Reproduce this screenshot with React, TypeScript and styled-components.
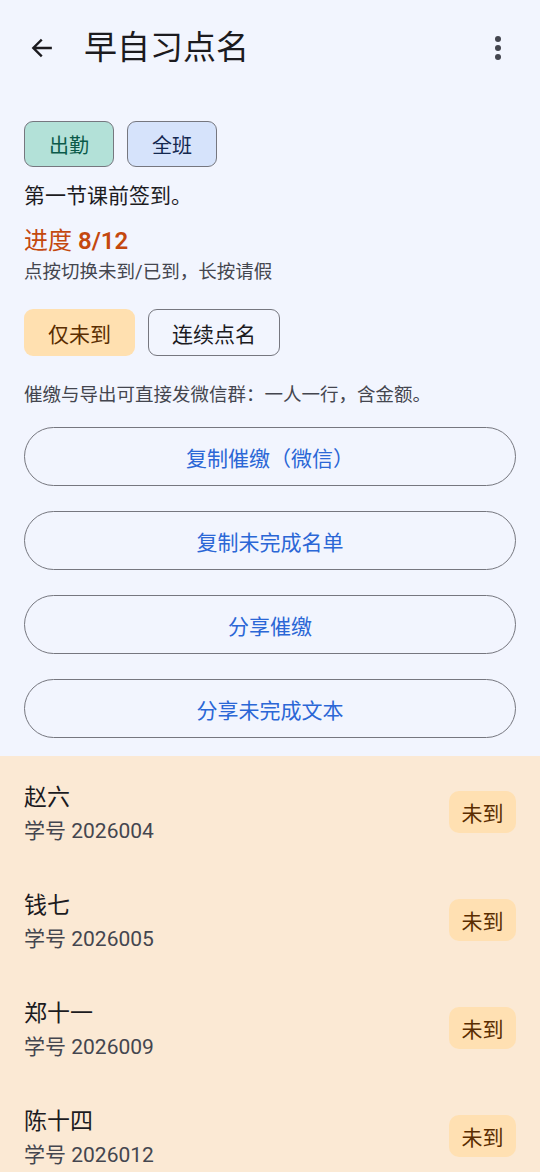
import * as React from "react";
import styled, { createGlobalStyle } from "styled-components";

type Student = { name: string; id: string };

const students: Student[] = [
  { name: "赵六", id: "2026004" },
  { name: "钱七", id: "2026005" },
  { name: "郑十一", id: "2026009" },
  { name: "陈十四", id: "2026012" },
];

const actions = ["复制催缴（微信）", "复制未完成名单", "分享催缴", "分享未完成文本"];

function App() {
  return (
    <Page>
      <GlobalStyle />
      <TopBar>
        <IconButton aria-label="back">
          <svg width="26" height="26" viewBox="0 0 24 24" fill="none">
            <path
              d="M20 12H4.5M11 5l-7 7 7 7"
              stroke="#1c1b1f"
              strokeWidth="2.2"
              strokeLinecap="square"
            />
          </svg>
        </IconButton>
        <Title>早自习点名</Title>
        <MenuButton aria-label="more">
          <svg width="8" height="26" viewBox="0 0 8 26">
            <circle cx="4" cy="4" r="3" fill="#44464f" />
            <circle cx="4" cy="13" r="3" fill="#44464f" />
            <circle cx="4" cy="22" r="3" fill="#44464f" />
          </svg>
        </MenuButton>
      </TopBar>

      <Content>
        <ChipRow>
          <Chip $bg="#b3e1d8" $fg="#0b5a49">出勤</Chip>
          <Chip $bg="#d6e3fb" $fg="#14284f">全班</Chip>
        </ChipRow>
        <Desc>第一节课前签到。</Desc>
        <Progress>进度 <b>8/12</b></Progress>
        <Hint>点按切换未到/已到，长按请假</Hint>
        <FilterRow>
          <FilterChip $active>仅未到</FilterChip>
          <FilterChip>连续点名</FilterChip>
        </FilterRow>
        <Note>催缴与导出可直接发微信群：一人一行，含金额。</Note>
        <ActionList>
          {actions.map((a) => (
            <OutlineButton key={a}>{a}</OutlineButton>
          ))}
        </ActionList>
      </Content>

      <StudentList>
        {students.map((s) => (
          <StudentRow key={s.id}>
            <StudentInfo>
              <StudentName>{s.name}</StudentName>
              <StudentId>学号 {s.id}</StudentId>
            </StudentInfo>
            <Badge>未到</Badge>
          </StudentRow>
        ))}
      </StudentList>
    </Page>
  );
}

const GlobalStyle = createGlobalStyle`
  html, body {
    margin: 0;
    padding: 0;
    background: #f2f5fe;
  }
  body {
    font-family: Roboto, "Noto Sans CJK SC", sans-serif;
    color: #1c1b1f;
  }
`;

const Page = styled.div`
  width: 540px;
  height: 1172px;
  overflow: hidden;
  background: #f2f5fe;
`;

const TopBar = styled.div`
  height: 96px;
  display: flex;
  align-items: center;
  padding: 0 22px 0 28px;
  box-sizing: border-box;
`;

const IconButton = styled.div`
  width: 28px;
  height: 28px;
  display: flex;
  align-items: center;
  justify-content: center;
`;

const Title = styled.div`
  margin-left: 28px;
  font-size: 33px;
  line-height: 40px;
  flex: 1;
  color: #1c1b1f;
`;

const MenuButton = styled.div`
  width: 40px;
  display: flex;
  justify-content: center;
`;

const Content = styled.div`
  padding: 25px 24px 18px;
  display: flex;
  flex-direction: column;
`;

const ChipRow = styled.div`
  display: flex;
  gap: 13px;
`;

const Chip = styled.div<{ $bg: string; $fg: string }>`
  width: 90px;
  height: 46px;
  box-sizing: border-box;
  border: 1.5px solid #76777f;
  border-radius: 9px;
  background: ${(p) => p.$bg};
  color: ${(p) => p.$fg};
  font-size: 20px;
  display: flex;
  align-items: center;
  justify-content: center;
`;

const Desc = styled.div`
  margin-top: 15px;
  font-size: 21px;
  line-height: 28px;
  color: #1c1b1f;
`;

const Progress = styled.div`
  margin-top: 16px;
  font-size: 24px;
  line-height: 30px;
  color: #c4480e;
  b {
    font-weight: 600;
  }
`;

const Hint = styled.div`
  margin-top: 3px;
  font-size: 18.5px;
  line-height: 26px;
  color: #44464f;
`;

const FilterRow = styled.div`
  margin-top: 24px;
  display: flex;
  gap: 13px;
`;

const FilterChip = styled.div<{ $active?: boolean }>`
  height: 47px;
  padding: 0 23px;
  box-sizing: border-box;
  border-radius: 9px;
  border: 1.5px solid ${(p) => (p.$active ? "transparent" : "#76777f")};
  background: ${(p) => (p.$active ? "#ffe0b0" : "transparent")};
  color: ${(p) => (p.$active ? "#5a2d00" : "#1c1b1f")};
  font-size: 21px;
  display: flex;
  align-items: center;
  justify-content: center;
`;

const Note = styled.div`
  margin-top: 26px;
  font-size: 18.5px;
  line-height: 26px;
  color: #44464f;
`;

const ActionList = styled.div`
  margin-top: 19px;
  display: flex;
  flex-direction: column;
  gap: 25px;
`;

const OutlineButton = styled.div`
  height: 59px;
  box-sizing: border-box;
  border: 1.5px solid #76777f;
  border-radius: 30px;
  display: flex;
  align-items: center;
  justify-content: center;
  color: #2b67d6;
  font-size: 21px;
`;

const StudentList = styled.div`
  background: #fbe9d4;
`;

const StudentRow = styled.div`
  height: 108px;
  padding: 0 24px;
  display: flex;
  align-items: center;
  justify-content: space-between;
`;

const StudentInfo = styled.div`
  display: flex;
  flex-direction: column;
  align-self: flex-start;
  padding-top: 26px;
`;

const StudentName = styled.div`
  font-size: 23px;
  line-height: 32px;
  color: #1c1b1f;
`;

const StudentId = styled.div`
  margin-top: 2px;
  font-size: 21px;
  line-height: 30px;
  color: #44464f;
`;

const Badge = styled.div`
  width: 67px;
  height: 42px;
  margin-top: 4px;
  border-radius: 10px;
  background: #ffe0b2;
  color: #5a2d00;
  font-size: 21px;
  display: flex;
  align-items: center;
  justify-content: center;
`;

export default App;
